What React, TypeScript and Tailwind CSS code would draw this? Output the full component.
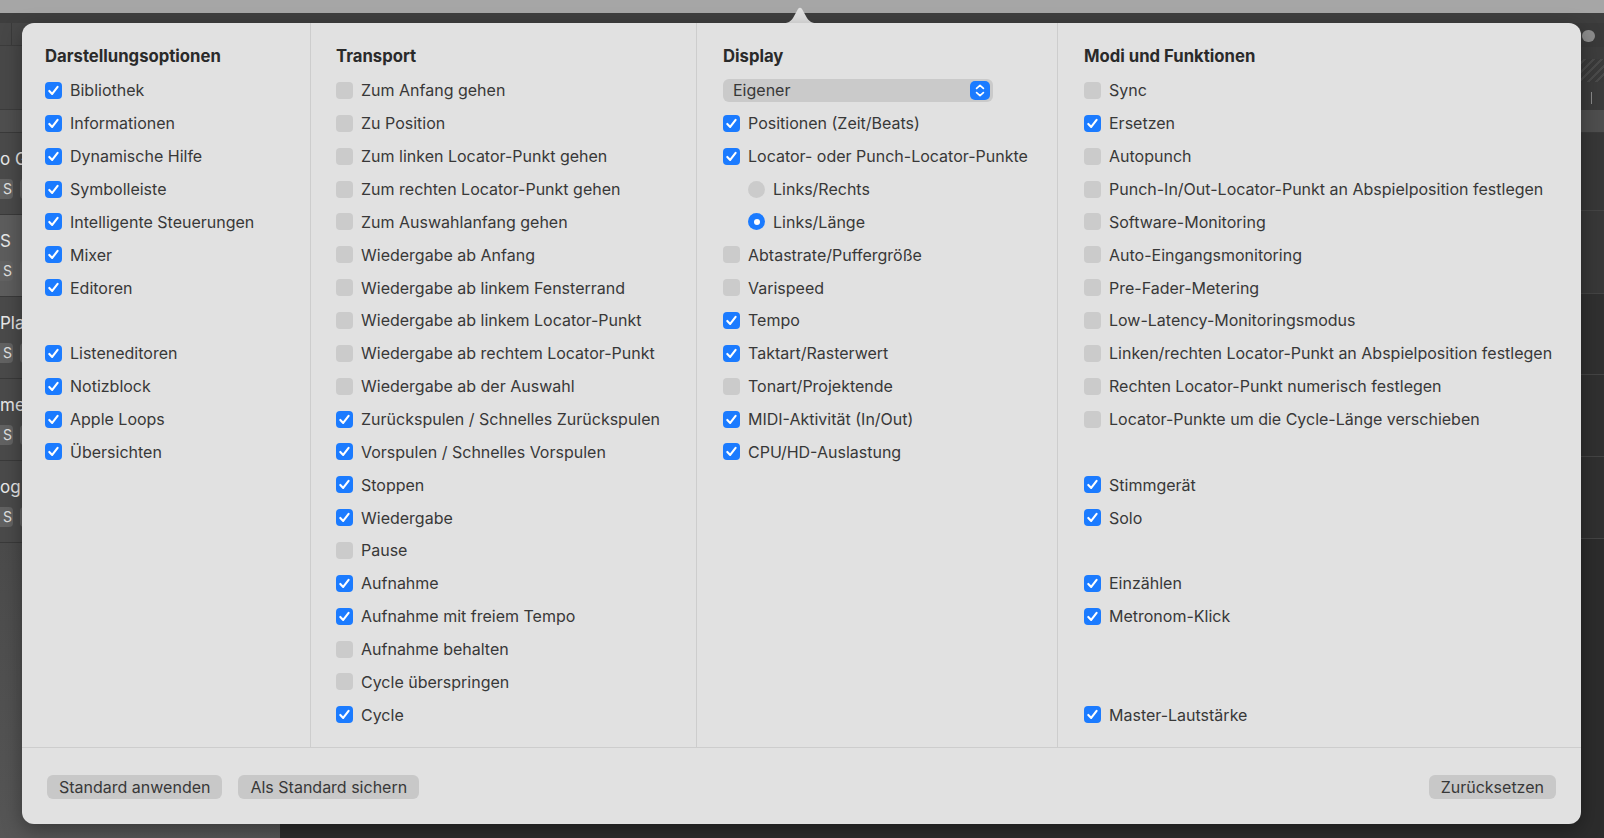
import React from "react";

type Row =
  | { kind: "check"; label: string; on: boolean }
  | { kind: "radio"; label: string; on: boolean }
  | { kind: "select"; label: string }
  | { kind: "gap" };

const c = (label: string, on: boolean): Row => ({ kind: "check", label, on });
const gap: Row = { kind: "gap" };

const columns: { title: string; width: string; pad: string; rows: Row[] }[] = [
  {
    title: "Darstellungsoptionen",
    width: "w-[289px]",
    pad: "pl-[23px]",
    rows: [
      c("Bibliothek", true),
      c("Informationen", true),
      c("Dynamische Hilfe", true),
      c("Symbolleiste", true),
      c("Intelligente Steuerungen", true),
      c("Mixer", true),
      c("Editoren", true),
      gap,
      c("Listeneditoren", true),
      c("Notizblock", true),
      c("Apple Loops", true),
      c("Übersichten", true),
    ],
  },
  {
    title: "Transport",
    width: "w-[386px]",
    pad: "pl-[25px]",
    rows: [
      c("Zum Anfang gehen", false),
      c("Zu Position", false),
      c("Zum linken Locator-Punkt gehen", false),
      c("Zum rechten Locator-Punkt gehen", false),
      c("Zum Auswahlanfang gehen", false),
      c("Wiedergabe ab Anfang", false),
      c("Wiedergabe ab linkem Fensterrand", false),
      c("Wiedergabe ab linkem Locator-Punkt", false),
      c("Wiedergabe ab rechtem Locator-Punkt", false),
      c("Wiedergabe ab der Auswahl", false),
      c("Zurückspulen / Schnelles Zurückspulen", true),
      c("Vorspulen / Schnelles Vorspulen", true),
      c("Stoppen", true),
      c("Wiedergabe", true),
      c("Pause", false),
      c("Aufnahme", true),
      c("Aufnahme mit freiem Tempo", true),
      c("Aufnahme behalten", false),
      c("Cycle überspringen", false),
      c("Cycle", true),
    ],
  },
  {
    title: "Display",
    width: "w-[361px]",
    pad: "pl-[26px]",
    rows: [
      { kind: "select", label: "Eigener" },
      c("Positionen (Zeit/Beats)", true),
      c("Locator- oder Punch-Locator-Punkte", true),
      { kind: "radio", label: "Links/Rechts", on: false },
      { kind: "radio", label: "Links/Länge", on: true },
      c("Abtastrate/Puffergröße", false),
      c("Varispeed", false),
      c("Tempo", true),
      c("Taktart/Rasterwert", true),
      c("Tonart/Projektende", false),
      c("MIDI-Aktivität (In/Out)", true),
      c("CPU/HD-Auslastung", true),
    ],
  },
  {
    title: "Modi und Funktionen",
    width: "flex-1",
    pad: "pl-[26px]",
    rows: [
      c("Sync", false),
      c("Ersetzen", true),
      c("Autopunch", false),
      c("Punch-In/Out-Locator-Punkt an Abspielposition festlegen", false),
      c("Software-Monitoring", false),
      c("Auto-Eingangsmonitoring", false),
      c("Pre-Fader-Metering", false),
      c("Low-Latency-Monitoringsmodus", false),
      c("Linken/rechten Locator-Punkt an Abspielposition festlegen", false),
      c("Rechten Locator-Punkt numerisch festlegen", false),
      c("Locator-Punkte um die Cycle-Länge verschieben", false),
      gap,
      c("Stimmgerät", true),
      c("Solo", true),
      gap,
      c("Einzählen", true),
      c("Metronom-Klick", true),
      gap,
      gap,
      c("Master-Lautstärke", true),
    ],
  },
];

function Box({ on }: { on: boolean }) {
  return on ? (
    <span className="flex h-[17px] w-[17px] shrink-0 items-center justify-center rounded-[4px] bg-[#1b7bff]">
      <svg width="17" height="17" viewBox="0 0 17 17">
        <path d="M4.3 8.9 L7.2 11.9 L12.6 4.9" fill="none" stroke="#fff" strokeWidth="2.1" strokeLinecap="round" strokeLinejoin="round" />
      </svg>
    </span>
  ) : (
    <span className="h-[17px] w-[17px] shrink-0 rounded-[4px] bg-[#cbcbcb]" />
  );
}

function Radio({ on }: { on: boolean }) {
  return on ? (
    <span className="flex h-[17px] w-[17px] shrink-0 items-center justify-center rounded-full bg-[#1b7bff]">
      <span className="h-[6px] w-[6px] rounded-full bg-white" />
    </span>
  ) : (
    <span className="h-[17px] w-[17px] shrink-0 rounded-full bg-[#cbcbcb]" />
  );
}

function Item({ row }: { row: Row }) {
  if (row.kind === "gap") return <div className="h-[32.87px]" />;
  if (row.kind === "select")
    return (
      <div className="flex h-[32.87px] items-center">
        <div className="flex h-[23px] w-[270px] items-center justify-between rounded-[6px] bg-[#cacaca] pl-[10px] pr-[3px]">
          <span>{row.label}</span>
          <span className="flex h-[19px] w-[20px] items-center justify-center rounded-[5px] bg-[#1b7bff]">
            <svg width="20" height="19" viewBox="0 0 20 19">
              <path d="M6.6 7.4 L10 4.3 L13.4 7.4 M6.6 11.6 L10 14.7 L13.4 11.6" fill="none" stroke="#fff" strokeWidth="1.7" strokeLinecap="round" strokeLinejoin="round" />
            </svg>
          </span>
        </div>
      </div>
    );
  if (row.kind === "radio")
    return (
      <div className="flex h-[32.87px] items-center gap-[8px] pl-[25px]">
        <Radio on={row.on} />
        <span>{row.label}</span>
      </div>
    );
  return (
    <div className="flex h-[32.87px] items-center gap-[8px]">
      <Box on={row.on} />
      <span className="whitespace-nowrap">{row.label}</span>
    </div>
  );
}

function TrackRow({ name, selected }: { name: string; selected?: boolean }) {
  return (
    <div className={`flex h-[82px] flex-col justify-center gap-[10px] border-b border-[#3a3a3a] ${selected ? "bg-[#5d5d5d]" : "bg-[#4a4a4a]"}`}>
      <span className="text-[17px] leading-[20px] text-[#e8e8e8]">{name}</span>
      <div className="flex gap-[7px]">
        <span className="flex h-[20px] w-[13px] items-center justify-end rounded-r-[4px] bg-[#626262] pr-[1px] text-[14px] text-[#e0e0e0]">S</span>
        <span className="h-[20px] w-[20px] rounded-[4px] bg-[#626262]" />
      </div>
    </div>
  );
}

export default function App() {
  return (
    <div className="relative h-[838px] w-[1604px] overflow-hidden bg-[#2c2c2c] font-['Inter','Liberation_Sans',sans-serif]">
      {/* app behind the popover */}
      <div className="h-[13px] bg-[#a6a6a6]" />
      <div className="h-[10px] bg-[#3e3e3e]" />
      <div className="flex h-[815px]">
        <div className="flex w-[280px] flex-col bg-[#4b4b4b]">
          <div className="flex h-[23px] border-b border-[#3c3c3c] bg-[#474747]">
            <span className="w-[12px] border-r border-[#3a3a3a]" />
          </div>
          <div className="h-[64px] border-b border-[#3c3c3c] bg-[#484848]" />
          <div className="h-[23px] border-b border-[#3a3a3a] bg-[#4f4f4f]" />
          <TrackRow name="o G" />
          <TrackRow name="S" selected />
          <TrackRow name="Pla" />
          <TrackRow name="me" />
          <TrackRow name="og I" />
          <div className="flex-1 bg-gradient-to-b from-[#4b4b4b] to-[#565656]" />
        </div>
        <div className="flex flex-1 flex-col">
          <div className="flex h-[24px] justify-end bg-[#3a3a3a] pr-[9px] pt-[7px]">
            <span className="h-[12px] w-[13px] rounded-full bg-[#8c8c8c]" />
          </div>
          <div className="h-[12px] bg-[#3d3d3d]" />
          <div className="h-[23px] bg-[repeating-linear-gradient(135deg,#3a3a3a_0px,#3a3a3a_4px,#4a4a4a_4px,#4a4a4a_6px)]" />
          <div className="flex h-[28px] justify-end bg-[#3b3b3b] pr-[12px] pt-[10px]">
            <span className="h-[12px] w-[1px] bg-[#8a8a8a]" />
          </div>
          <div className="h-[23px] border-b border-[#3a3a3a] bg-[#4e4e4e]" />
          <div className="h-[78px] border-b border-[#444] bg-[#373737]" />
          <div className="h-[83px] border-b border-[#444] bg-[#383838]" />
          <div className="h-[81px] border-b border-[#444] bg-[#303030]" />
          <div className="h-[82px] border-b border-[#444] bg-[#303030]" />
          <div className="h-[82px] border-b border-[#444] bg-[#303030]" />
          <div className="flex-1 bg-[#2c2c2c]" />
        </div>
      </div>

      {/* popover arrow */}
      <svg className="absolute left-[780px] top-[6px]" width="40" height="18" viewBox="0 0 40 18">
        <path d="M0 17.5 C8 17.5 10 16 13 12 L18 3 C19 1.3 21 1.3 22 3 L27 12 C30 16 32 17.5 40 17.5 L40 18 L0 18 Z" fill="#e1e1e1" />
      </svg>

      {/* popover */}
      <div className="absolute left-[22px] top-[23px] flex h-[801px] w-[1559px] flex-col rounded-[12px] bg-[#e1e1e1] text-[16px] text-[#383838] shadow-[0_6px_20px_rgba(0,0,0,0.35)]">
        <div className="flex h-[725px] border-b border-[#cdcdcd]">
          {columns.map((col, i) => (
            <div
              key={col.title}
              className={`${col.width} ${col.pad} pt-[23px] ${i < columns.length - 1 ? "border-r border-[#cdcdcd]" : ""}`}
            >
              <div className="mb-[8px] text-[16.7px] font-bold leading-[20px] text-[#2a2a2a]">{col.title}</div>
              {col.rows.map((row, j) => (
                <Item key={j} row={row} />
              ))}
            </div>
          ))}
        </div>
        <div className="flex flex-1 items-start justify-between px-[25px] pt-[27px]">
          <div className="flex gap-[16px]">
            <button className="h-[24px] rounded-[6px] bg-[#c8c8c8] px-[12px] leading-[24px]">Standard anwenden</button>
            <button className="h-[24px] rounded-[6px] bg-[#c8c8c8] px-[12px] leading-[24px]">Als Standard sichern</button>
          </div>
          <button className="h-[24px] rounded-[6px] bg-[#c8c8c8] px-[12px] leading-[24px]">Zurücksetzen</button>
        </div>
      </div>
    </div>
  );
}
